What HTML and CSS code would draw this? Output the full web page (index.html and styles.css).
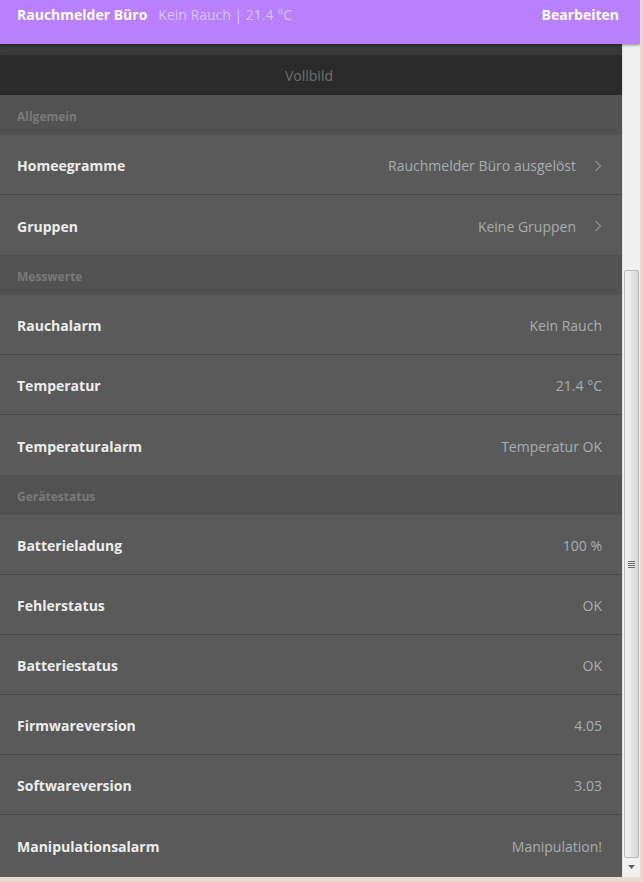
FILE: index.html
```html
<!DOCTYPE html>
<html lang="de">
<head>
<meta charset="utf-8">
<title>Rauchmelder Büro</title>
<link rel="stylesheet" href="styles.css">
</head>
<body>
<div class="window">
  <header class="topbar">
    <div class="title"><span class="name">Rauchmelder Büro</span><span class="sub">Kein Rauch | 21.4 °C</span></div>
    <div class="edit">Bearbeiten</div>
  </header>
  <div class="body">
    <main class="content">
      <div class="spacer"></div>
      <div class="fullscreen">Vollbild</div>
      <div class="section">Allgemein</div>
      <div class="row"><span class="label">Homeegramme</span><span class="value">Rauchmelder Büro ausgelöst<svg class="chev" width="8" height="12" viewBox="0 0 8 12"><path d="M1.5 1 L6.5 6 L1.5 11" fill="none" stroke="#8f8f8f" stroke-width="1.2"/></svg></span></div>
      <div class="row last"><span class="label">Gruppen</span><span class="value">Keine Gruppen<svg class="chev" width="8" height="12" viewBox="0 0 8 12"><path d="M1.5 1 L6.5 6 L1.5 11" fill="none" stroke="#8f8f8f" stroke-width="1.2"/></svg></span></div>
      <div class="section">Messwerte</div>
      <div class="row"><span class="label">Rauchalarm</span><span class="value">Kein Rauch</span></div>
      <div class="row"><span class="label">Temperatur</span><span class="value">21.4 °C</span></div>
      <div class="row last"><span class="label">Temperaturalarm</span><span class="value">Temperatur OK</span></div>
      <div class="section">Gerätestatus</div>
      <div class="row"><span class="label">Batterieladung</span><span class="value">100 %</span></div>
      <div class="row"><span class="label">Fehlerstatus</span><span class="value">OK</span></div>
      <div class="row"><span class="label">Batteriestatus</span><span class="value">OK</span></div>
      <div class="row"><span class="label">Firmwareversion</span><span class="value">4.05</span></div>
      <div class="row"><span class="label">Softwareversion</span><span class="value">3.03</span></div>
      <div class="row last"><span class="label">Manipulationsalarm</span><span class="value">Manipulation!</span></div>
    </main>
    <div class="scrollbar">
      <div class="track-top"></div>
      <div class="thumb"><span class="grip"></span><span class="grip"></span><span class="grip"></span><span class="grip"></span></div>
      <div class="arrow-down"><svg width="8" height="5" viewBox="0 0 8 5"><path d="M0 0 H7 L3.5 4 Z" fill="#606060"/></svg></div>
    </div>
  </div>
</div>
</body>
</html>
```
FILE: styles.css
```css
* { box-sizing: border-box; }
html, body { margin: 0; padding: 0; }
body {
  background: #ead9cd;
  font-family: "Open Sans", "Liberation Sans", sans-serif;
  width: 643px;
  height: 882px;
  overflow: hidden;
}
.window {
  width: 640px;
  height: 877px;
  display: flex;
  flex-direction: column;
  position: relative;
  overflow: hidden;
  background: #f0f0f0;
}
.topbar {
  height: 44px;
  flex: none;
  background: #b880fa;
  display: flex;
  justify-content: space-between;
  align-items: flex-start;
  padding: 5px 21px 0 17px;
  box-shadow: 0 1px 3px rgba(0,0,0,0.45);
  position: relative;
  z-index: 2;
}
.title { display: flex; align-items: baseline; }
.name { color: #ffffff; font-weight: 700; font-size: 14px; }
.sub { color: #dcc3fb; font-size: 14px; margin-left: 11px; }
.edit { color: #ffffff; font-weight: 700; font-size: 14px; }
.body {
  flex: 1;
  display: flex;
  min-height: 0;
}
.content {
  width: 622px;
  flex: none;
  background: #5a5a5a;
  overflow: hidden;
}
.spacer { height: 11px; background: #383838; }
.fullscreen {
  height: 40px;
  background: #2b2b2b;
  color: #6f6f6f;
  font-size: 14px;
  display: flex;
  align-items: center;
  justify-content: center;
  padding-right: 4px;
}
.section {
  height: 40px;
  background: #525252;
  color: #7a7a7a;
  font-size: 12px;
  font-weight: 700;
  display: flex;
  align-items: center;
  padding: 2px 0 0 17px;
}
.row {
  height: 60px;
  background: #5a5a5a;
  border-bottom: 1px solid #474747;
  display: flex;
  align-items: center;
  justify-content: space-between;
  padding: 2px 20px 0 17px;
}
.row.last { border-bottom: none; }
.label { color: #ececec; font-weight: 700; font-size: 14px; }
.value {
  color: #a9adb1;
  font-size: 14px;
  display: flex;
  align-items: center;
}
.chev { margin-left: 18px; margin-right: 0; }
.scrollbar {
  width: 18px;
  flex: none;
  background: #f0f0f0;
  border-left: 1px solid #e2e2e2;
  display: flex;
  flex-direction: column;
}
.track-top { height: 226px; flex: none; }
.thumb {
  flex: 1;
  margin: 0 1px 0 1px;
  border: 1px solid #b8b8b8;
  border-radius: 2px;
  background: linear-gradient(to right, #f4f4f4, #e6e6e6 50%, #d8d8d8);
  display: flex;
  flex-direction: column;
  align-items: center;
  justify-content: center;
  gap: 1px;
}
.grip { display: block; width: 7px; height: 1px; background: #707070; }
.arrow-down {
  height: 19px;
  flex: none;
  display: flex;
  align-items: center;
  justify-content: center;
}
```
